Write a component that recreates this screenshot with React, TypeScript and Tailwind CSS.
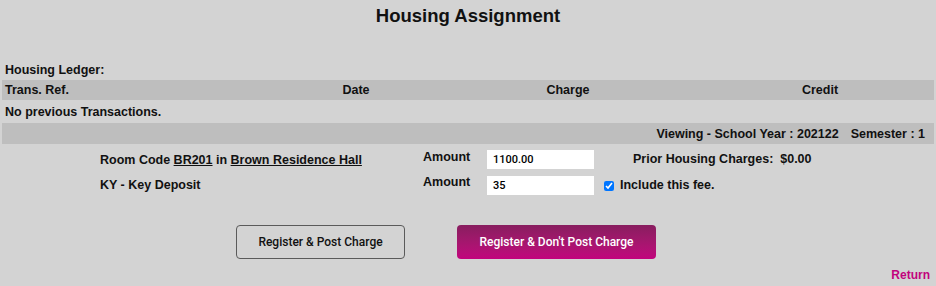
import React from 'react';

const ledgerCols = 'grid grid-cols-[281px_146px_278px_226px]';

export default function App() {
  return (
    <div className="w-[936px] h-[286px] bg-[#d3d3d3] text-[#111] font-['Liberation_Sans',Arial,sans-serif] font-bold text-[12.5px] overflow-hidden">
      {/* Title */}
      <h1 className="pt-[5px] h-[27px] leading-[22px] text-center text-[18.5px] font-bold">
        Housing Assignment
      </h1>

      {/* Ledger */}
      <div className="mt-[35px] px-[2px]">
        <div className="h-[18px] leading-[16px] pl-[3px]">Housing Ledger:</div>
        <div className={`${ledgerCols} h-[20px] leading-[20px] bg-[#bebebe]`}>
          <div className="pl-[3px]">Trans. Ref.</div>
          <div className="text-center">Date</div>
          <div className="text-center">Charge</div>
          <div className="text-center">Credit</div>
        </div>
        <div className="h-[23px] pt-[2px] leading-[21px] pl-[3px]">No previous Transactions.</div>
        <div className="h-[21px] pt-[1px] leading-[20px] bg-[#bebebe] flex justify-end gap-[12px] pr-[9px]">
          <span>Viewing - School Year : 202122</span>
          <span>Semester : 1</span>
        </div>
      </div>

      {/* Charges */}
      <div className="mt-[2px] grid grid-cols-[100px_323px_64px_117px_1fr] grid-rows-[26px_26px]">
        <div />
        <div className="flex items-center pt-[2px]">
          Room Code&nbsp;<a className="underline">BR201</a>&nbsp;in&nbsp;
          <a className="underline">Brown Residence Hall</a>
        </div>
        <div className="flex items-center pb-[3px]">Amount</div>
        <div className="flex items-center">
          <input
            defaultValue="1100.00"
            className="w-[107px] h-[19px] bg-white px-[6px] text-[11px] font-medium font-['Roboto',Arial,sans-serif] text-black outline-none"
          />
        </div>
        <div className="flex items-center pl-[29px] pt-[1px]">
          Prior Housing Charges:&nbsp;&nbsp;$0.00
        </div>

        <div />
        <div className="flex items-center pt-[1px]">KY - Key Deposit</div>
        <div className="flex items-center pb-[5px]">Amount</div>
        <div className="flex items-center">
          <input
            defaultValue="35"
            className="w-[107px] h-[19px] bg-white px-[6px] text-[11px] font-medium font-['Roboto',Arial,sans-serif] text-black outline-none"
          />
        </div>
        <div className="flex items-center gap-[6px] pt-[1px]">
          <input type="checkbox" defaultChecked className="w-[10px] h-[10px] m-0 accent-[#0075ff]" />
          <span>Include this fee.</span>
        </div>
      </div>

      {/* Actions */}
      <div className="mt-[27px] flex pl-[236px] gap-[52px] font-['Roboto',Arial,sans-serif] font-medium text-[12px]">
        <button className="w-[169px] h-[34px] rounded-[4px] border border-[#5a5a5a] text-[#111]">
          Register &amp; Post Charge
        </button>
        <button className="w-[199px] h-[34px] rounded-[4px] bg-gradient-to-b from-[#881d5f] to-[#c2037d] text-white">
          Register &amp; Don't Post Charge
        </button>
      </div>

      <div className="mt-[9px] pr-[6px] text-right text-[12px] leading-[14px] text-[#c2037d]">
        <a>Return</a>
      </div>
    </div>
  );
}
